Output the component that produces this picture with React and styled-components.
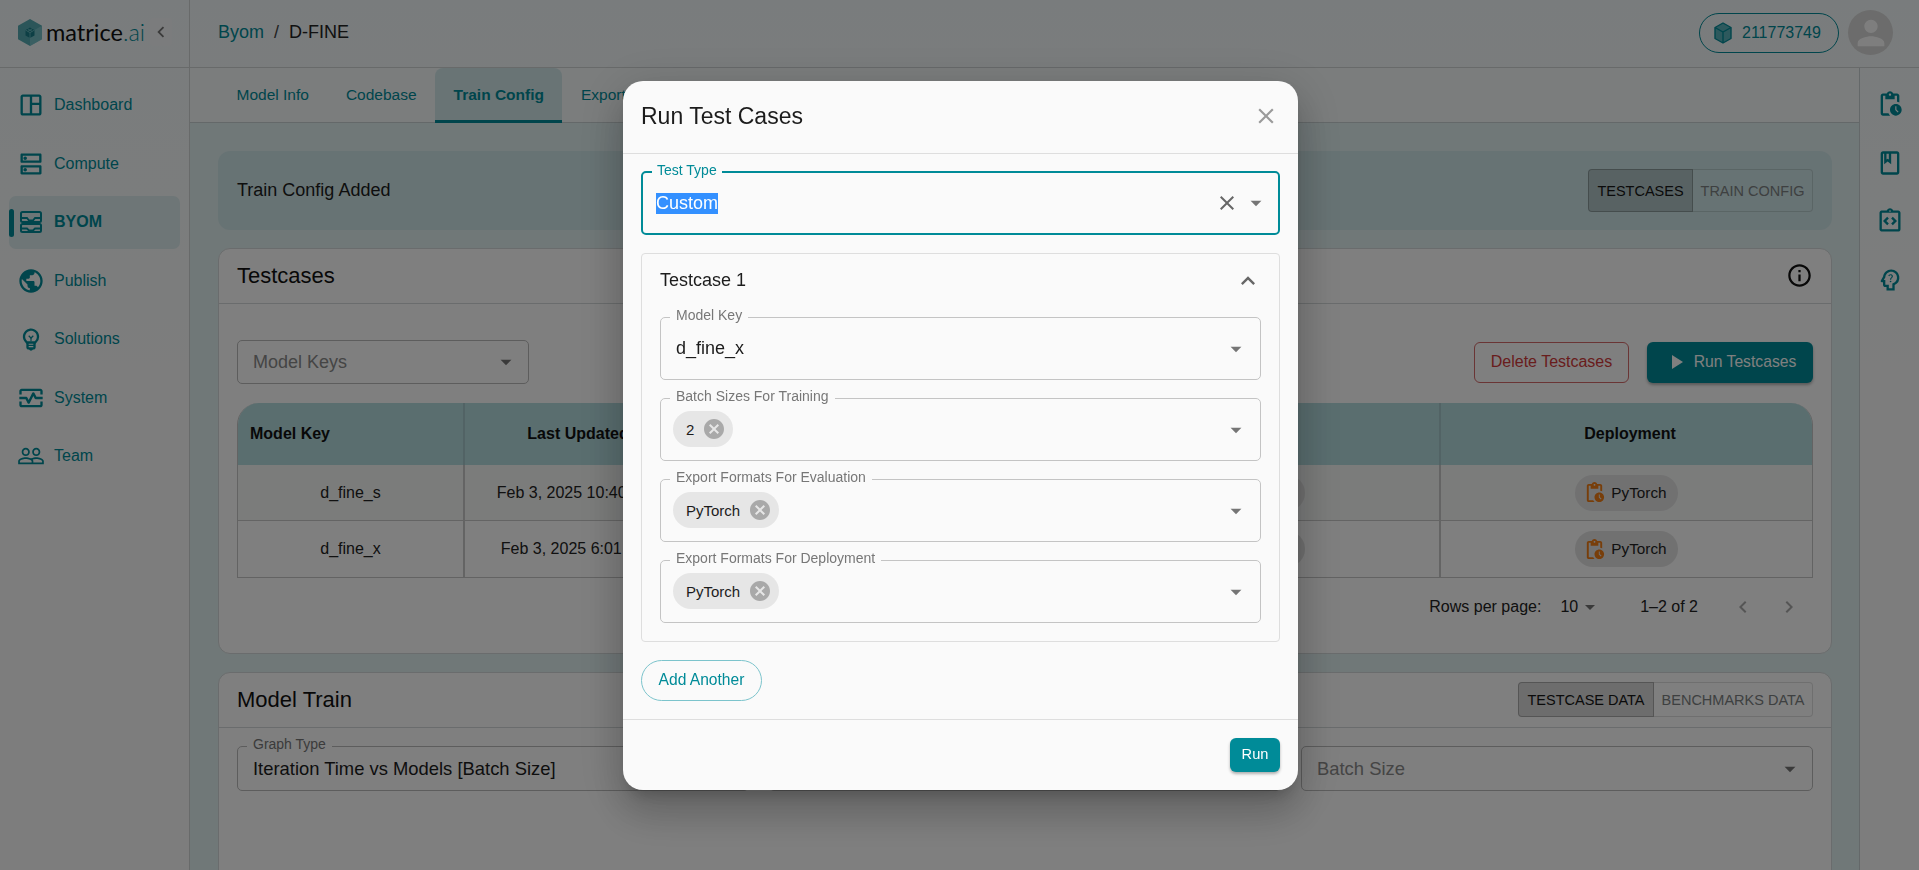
import React from 'react';
import styled, { createGlobalStyle } from 'styled-components';
import {
  MdOutlineSpaceDashboard, MdOutlineDns, MdPublic, MdOutlineEmojiObjects,
  MdOutlineMonitorHeart, MdPeopleOutline, MdOutlinePendingActions, MdOutlineBook,
  MdOutlineIntegrationInstructions, MdOutlinePsychologyAlt, MdInfoOutline, MdPlayArrow,
  MdChevronLeft, MdChevronRight, MdClose, MdArrowDropDown, MdExpandLess, MdCancel, MdPerson,
} from 'react-icons/md';

const teal = '#008b98';
const font = '"Liberation Sans", Arial, sans-serif';

const Global = createGlobalStyle`
  html, body { margin: 0; height: 100%; overflow: hidden; }
  body { font-family: ${font}; background: #fbfdfd; color: #1c1c1c; }
  * { box-sizing: border-box; }
`;

const Page = styled.div`
  height: 870px;
  display: grid;
  grid-template-columns: 190px 1fr 60px;
  grid-template-rows: 68px 1fr;
  background: linear-gradient(180deg, #f3f9fa 0, #fbfbfb 420px);
`;
const Brand = styled.div`
  border-right: 1px solid #d0d4d5;
  border-bottom: 1px solid #d0d4d5;
  display: flex;
  align-items: center;
  padding: 0 17px 3px 18px;
`;
const LogoText = styled.span`
  font-family: Lato, sans-serif;
  font-weight: 400;
  font-size: 23.5px;
  margin-left: 4px;
  color: #111;
  b { font-weight: 300; color: ${teal}; }
`;
const Collapse = styled.span`
  width: 22px; height: 28px;
  margin-left: auto;
  display: flex; align-items: center; justify-content: center;
  background: #f7f9fa;
  border-radius: 4px;
  color: #777;
  font-size: 24px;
`;
const TopBar = styled.header`
  grid-column: 2 / 4;
  border-bottom: 1px solid #d0d4d5;
  display: flex;
  align-items: center;
  padding: 0 26px 2px 28px;
  font-size: 18px;
`;
const Crumb = styled.span`color: ${teal};`;
const Slash = styled.span`margin: 0 10px; color: #444;`;
const Current = styled.span`flex: 1; color: #222;`;
const Credits = styled.div`
  height: 40px; width: 140px;
  border: 1px solid ${teal};
  border-radius: 20px;
  display: flex; align-items: center;
  padding-left: 14px;
  gap: 10px;
  color: ${teal};
  font-size: 16px;
`;
const Avatar = styled.div`
  width: 45px; height: 45px;
  margin-left: 9px;
  border-radius: 50%;
  background: #d8d8d8;
  color: #fdfdfd;
  display: flex; align-items: center; justify-content: center;
  font-size: 40px;
`;
const Side = styled.nav`
  border-right: 1px solid #d0d4d5;
  padding: 10.5px 9px 0;
  display: flex;
  flex-direction: column;
  gap: 5.5px;
`;
const NavItem = styled.div`
  position: relative;
  height: 53px;
  display: flex; align-items: center;
  gap: 9px;
  padding-left: 8px;
  border-radius: 7px;
  color: ${teal};
  font-size: 16px;
  font-weight: ${p => (p.$active ? 700 : 400)};
  background: ${p => (p.$active ? '#dcecee' : 'transparent')};
  svg { font-size: 28px; flex: none; }
  ${p => p.$active && `
    &::before {
      content: ''; position: absolute; left: 0; top: 13px;
      width: 5px; height: 28px; border-radius: 3px; background: ${teal};
    }
  `}
`;
const Main = styled.main`
  background: #e1f0f1;
  display: flex; flex-direction: column;
  min-width: 0;
  overflow: hidden;
`;
const Tabs = styled.div`
  height: 55px;
  flex: none;
  background: #f6fafb;
  border-bottom: 1px solid #c9d1d3;
  display: flex;
  padding-left: 28px;
`;
const Tab = styled.div`
  height: 55px;
  padding: 2px 18.5px 0;
  display: flex; align-items: center;
  font-size: 15.5px;
  color: ${teal};
  font-weight: ${p => (p.$active ? 700 : 400)};
  background: ${p => (p.$active ? '#d2e9eb' : 'transparent')};
  border-radius: 8px 8px 0 0;
  border-bottom: 3px solid ${p => (p.$active ? teal : 'transparent')};
`;
const Content = styled.div`
  padding: 28px 27px 0 28px;
  display: flex; flex-direction: column;
  gap: 18px;
`;
const Banner = styled.div`
  height: 79px;
  border-radius: 12px;
  background: #cfe6e8;
  display: flex; align-items: center; justify-content: space-between;
  padding: 0 19px 0 19px;
  font-size: 18px;
  color: #1c1c1c;
`;
const Toggle = styled.div`display: flex; height: ${p => p.$h || 43}px;`;
const ToggleBtn = styled.div`
  width: ${p => p.$w}px;
  display: flex; align-items: center; justify-content: center;
  font-size: 14.5px;
  white-space: nowrap;
  color: ${p => (p.$on ? '#161616' : '#7c8182')};
  background: ${p => (p.$on ? 'rgba(0,0,0,.14)' : 'transparent')};
  border: 1px solid ${p => (p.$on ? 'rgba(0,0,0,.22)' : 'rgba(0,0,0,.12)')};
  border-left-width: ${p => (p.$on ? 1 : 0)}px;
  border-radius: ${p => (p.$on ? '4px 0 0 4px' : '0 4px 4px 0')};
`;
const Card = styled.section`
  background: #fefefe;
  border: 1px solid #d4d9da;
  border-radius: 12px;
  height: ${p => p.$h}px;
  flex: none;
`;
const CardHead = styled.div`
  height: ${p => p.$h}px;
  border-bottom: 1px solid #d4d9da;
  display: flex; align-items: center; justify-content: space-between;
  padding: 0 18px 1px;
  font-size: 22px;
  color: #111;
`;
const InfoIcon = styled(MdInfoOutline)`font-size: 27px; color: #111;`;
const CardBody = styled.div`padding: 36px 18px 0;`;
const Controls = styled.div`display: flex; align-items: center; height: 44px;`;
const Outlined = styled.div`
  position: relative;
  height: ${p => p.$h || 45}px;
  width: ${p => (p.$w ? p.$w + 'px' : 'auto')};
  border: 1px solid #bbb;
  border-radius: 5px;
  display: flex; align-items: center; justify-content: space-between;
  padding: 0 9px 0 15px;
  font-size: 18px;
  color: ${p => (p.$muted ? '#8a8a8a' : '#1c1c1c')};
`;
const SelectField = styled(Outlined)`
  padding-top: 1px;
  font-size: 18.4px;
`;
const Arrow = styled(MdArrowDropDown)`font-size: 26px; color: #757575; flex: none;`;
const Legend = styled.span`
  position: absolute;
  left: 9px; top: -10.5px;
  padding: 0 6px;
  font-size: 14px;
  line-height: 15px;
  color: #777;
  background: linear-gradient(transparent 6px, ${p => p.$bg || '#fefefe'} 6px, ${p => p.$bg || '#fefefe'} 13px, transparent 13px);
  white-space: nowrap;
`;
const Spacer = styled.div`flex: 1;`;
const DangerBtn = styled.div`
  width: 155px; height: 41px;
  border: 1px solid #d56a6a;
  border-radius: 6px;
  color: #d23a3a;
  display: flex; align-items: center; justify-content: center;
  font-size: 16px;
`;
const PrimaryBtn = styled.div`
  width: 166px; height: 41px;
  margin-left: 18px;
  border-radius: 6px;
  background: ${teal};
  color: #fff;
  display: flex; align-items: center; justify-content: center;
  gap: 6px;
  font-size: 15.7px;
  box-shadow: 0 2px 3px rgba(0,0,0,.3);
  svg { font-size: 24px; }
`;
const Table = styled.div`
  margin-top: 19px;
  display: grid;
  grid-template-columns: 225px 228px 374px 374px 1fr;
  border: 1px solid #c6c6c6;
  border-top: 0;
  border-radius: 22px 22px 0 0;
  overflow: hidden;
`;
const Th = styled.div`
  height: 62px;
  background: #b4dcdf;
  border-left: ${p => (p.$first ? 0 : '2px solid #a5c7ca')};
  display: flex; align-items: center;
  justify-content: ${p => (p.$first ? 'flex-start' : 'center')};
  padding-left: ${p => (p.$first ? 12 : p.$nudge || 0)}px;
  font-weight: 700; font-size: 16px; color: #111;
`;
const Td = styled.div`
  height: 56px;
  background: ${p => (p.$odd ? '#f6f8f7' : '#fefefe')};
  border-left: ${p => (p.$first ? 0 : '2px solid #c9c9c9')};
  border-bottom: ${p => (p.$last ? 0 : '1px solid #c9c9c9')};
  padding-right: ${p => p.$pad || 0}px;
  display: flex; align-items: center; justify-content: center;
  font-size: 16px; color: #222;
`;
const FormatChip = styled.div`
  height: 36px; width: 103px;
  padding-right: 3px;
  border-radius: 18px;
  background: #e2e2e2;
  display: flex; align-items: center; justify-content: center;
  gap: 5px;
  font-size: 15.3px;
  color: #222;
  svg { font-size: 23px; color: #f07c14; }
`;
const Pager = styled.div`
  height: 58px;
  display: flex; align-items: center; justify-content: flex-end;
  font-size: 16px;
  color: #222;
`;
const PagerArrows = styled.div`
  display: flex; gap: 22px;
  margin: 0 12px 0 33px;
  font-size: 24px;
  color: #aaa;
`;
const PageSize = styled.span`
  display: flex; align-items: center;
  margin: 0 44px 0 19px;
  svg { font-size: 24px; margin: 0 -6px 0 0; color: #757575; }
`;
const SelectRow = styled.div`
  display: grid; grid-template-columns: repeat(3, 1fr); gap: 20px;
  padding: 18px 18px 0;
`;
const Rail = styled.aside`
  border-left: 1px solid #c9d1d3;
  display: flex; flex-direction: column; align-items: center;
  padding-top: 22px;
  gap: 30.5px;
  color: ${teal};
  font-size: 28px;
  svg { display: block; }
`;
const Backdrop = styled.div`
  position: fixed; inset: 0;
  background: rgba(0,0,0,.5);
  display: flex;
  justify-content: center;
  padding: 81px 0 0 2px;
`;
const Modal = styled.div`
  width: 675px; height: 709px;
  background: #fafafa;
  border-radius: 20px;
  box-shadow: 0 11px 15px -7px rgba(0,0,0,.2), 0 24px 38px 3px rgba(0,0,0,.14), 0 9px 46px 8px rgba(0,0,0,.12);
  display: flex; flex-direction: column;
`;
const ModalHead = styled.div`
  height: 73px; flex: none;
  border-bottom: 1px solid #dedede;
  display: flex; align-items: center; justify-content: space-between;
  padding: 0 19px 2px 18px;
  font-size: 23px;
  color: #1c1c1c;
  svg { font-size: 26px; color: #9a9a9a; }
`;
const ModalBody = styled.div`
  flex: 1;
  padding: 17px 18px 0;
  display: flex; flex-direction: column; align-items: flex-start;
`;
const TypeField = styled.div`
  position: relative;
  width: 100%; height: 64px;
  border: 2px solid ${teal};
  border-radius: 5px;
  display: flex; align-items: center;
  padding: 0 9px 0 13px;
  font-size: 18px;
`;
const TypeLegend = styled(Legend)`
  color: ${teal}; left: 9px; top: -10px; padding: 0 5px;
`;
const Highlight = styled.span`
  background: #3390ff; color: #fff; line-height: 21px; flex: none;
`;
const Grow = styled.span`flex: 1;`;
const ClearIcon = styled(MdClose)`font-size: 24px; color: #666; margin-right: 4px;`;
const Accordion = styled.div`
  width: 100%; height: 389px;
  margin-top: 18px;
  border: 1px solid #dedede;
  border-radius: 4px;
  padding: 0 18px;
`;
const AccHead = styled.div`
  height: 63px;
  padding-bottom: 10px;
  display: flex; align-items: center; justify-content: space-between;
  font-size: 18px;
  color: #1c1c1c;
  svg { font-size: 28px; color: #666; margin-right: -1px; }
`;
const Fields = styled.div`display: flex; flex-direction: column; gap: 18px;`;
const Field = styled(Outlined)`
  height: 63px;
  border-color: #c4c4c4;
  padding: 0 11px 0 12px;
`;
const FieldValue = styled.span`padding-left: 3px;`;
const ChipBox = styled.div`
  height: 36px;
  margin-top: -1px;
  border-radius: 18px;
  background: #e6e6e6;
  display: flex; align-items: center;
  padding: 0 7px 0 13px;
  gap: 8px;
  font-size: 15px;
  color: #1c1c1c;
  svg { font-size: 24px; color: #a9a9a9; }
`;
const AddBtn = styled.div`
  margin-top: 18px;
  width: 121px; height: 41px;
  padding-bottom: 1px;
  border: 1px solid #7cc4cc;
  border-radius: 21px;
  display: flex; align-items: center; justify-content: center;
  font-size: 15.6px;
  color: ${teal};
`;
const ModalFoot = styled.div`
  height: 71px; flex: none;
  border-top: 1px solid #dedede;
  display: flex; justify-content: flex-end;
  padding: 18px 18px 0;
`;
const RunBtn = styled.div`
  width: 50px; height: 34px;
  background: ${teal};
  border-radius: 6px;
  color: #fff;
  font-size: 14.6px;
  padding-bottom: 2px;
  display: flex; align-items: center; justify-content: center;
  box-shadow: 0 2px 3px rgba(0,0,0,.3);
`;

const Logo = () => (
  <svg width="24" height="27" viewBox="0 0 24 27">
    <path d="M12 0 24 6.7v13.6L12 27 0 20.3V6.7z" fill="#56aab2" />
    <path d="M12 13.5 24 6.7v13.6L12 27z" fill="#8ed0d6" opacity=".55" />
    <path d="M12 8.5l4.5 2.6v5.3L12 19l-4.5-2.6v-5.3z" fill="#1a7f8a" />
    <path d="M7.5 11l4.5 2.7 4.5-2.7M12 13.7V19M9.7 9.8l4.5 2.6M14.3 9.8l-4.5 2.6" stroke="#7cc6cc" strokeWidth=".7" fill="none" />
  </svg>
);
const Cube = () => (
  <svg width="18" height="22" viewBox="0 0 18 22">
    <path d="M9 1 17 5.5v11L9 21 1 16.5v-11z" fill="#5bb2ba" stroke={teal} strokeWidth="1.4" strokeLinejoin="round" />
    <path d="M1 5.5 9 10l8-4.5M9 10v11" fill="none" stroke={teal} strokeWidth="1.4" />
  </svg>
);
const ByomIcon = () => (
  <svg width="28" height="28" viewBox="0 0 28 28" fill="none" stroke={teal} strokeWidth="2">
    <rect x="4" y="4" width="20" height="10" rx="1.5" />
    <rect x="4" y="16" width="20" height="8" rx="1.5" />
    <path d="M5 10h5l2 2.5h4l2-2.5h5M5 20.5h5l2 2h4l2-2h5" strokeWidth="1.8" />
  </svg>
);

const nav = [
  ['Dashboard', <MdOutlineSpaceDashboard />],
  ['Compute', <MdOutlineDns />],
  ['BYOM', <ByomIcon />, true],
  ['Publish', <MdPublic />],
  ['Solutions', <MdOutlineEmojiObjects />],
  ['System', <MdOutlineMonitorHeart />],
  ['Team', <MdPeopleOutline />],
];
const rows = [
  ['d_fine_s', 'Feb 3, 2025 10:40 AM', true],
  ['d_fine_x', 'Feb 3, 2025 6:01 PM', false],
];
const Chip = ({ children }) => <ChipBox>{children}<MdCancel /></ChipBox>;
const Format = () => <FormatChip><MdOutlinePendingActions />PyTorch</FormatChip>;

export default function App() {
  return (
    <Page>
      <Global />
      <Brand>
        <Logo />
        <LogoText>matrice<b>.ai</b></LogoText>
        <Collapse><MdChevronLeft /></Collapse>
      </Brand>
      <TopBar>
        <Crumb>Byom</Crumb><Slash>/</Slash><Current>D-FINE</Current>
        <Credits><Cube />211773749</Credits>
        <Avatar><MdPerson /></Avatar>
      </TopBar>
      <Side>
        {nav.map(([label, icon, active]) => (
          <NavItem key={label} $active={active}>{icon}{label}</NavItem>
        ))}
      </Side>
      <Main>
        <Tabs>
          <Tab>Model Info</Tab>
          <Tab>Codebase</Tab>
          <Tab $active>Train Config</Tab>
          <Tab>Export Config</Tab>
        </Tabs>
        <Content>
          <Banner>
            Train Config Added
            <Toggle>
              <ToggleBtn $on $w={105}>TESTCASES</ToggleBtn>
              <ToggleBtn $w={120}>TRAIN CONFIG</ToggleBtn>
            </Toggle>
          </Banner>
          <Card $h={406}>
            <CardHead $h={55}>Testcases<InfoIcon /></CardHead>
            <CardBody>
              <Controls>
                <Outlined $w={292} $h={44} $muted>Model Keys<Arrow /></Outlined>
                <Spacer />
                <DangerBtn>Delete Testcases</DangerBtn>
                <PrimaryBtn><MdPlayArrow />Run Testcases</PrimaryBtn>
              </Controls>
              <Table>
                <Th $first>Model Key</Th>
                <Th>Last Updated</Th>
                <Th>Train</Th>
                <Th>Evaluation</Th>
                <Th $nudge={7}>Deployment</Th>
                {rows.map(([key, date, odd], i) => (
                  <React.Fragment key={key}>
                    <Td $first $odd={odd} $last={i === 1}>{key}</Td>
                    <Td $odd={odd} $last={i === 1} $pad={5}>{date}</Td>
                    <Td $odd={odd} $last={i === 1}><Format /></Td>
                    <Td $odd={odd} $last={i === 1}><Format /></Td>
                    <Td $odd={odd} $last={i === 1}><Format /></Td>
                  </React.Fragment>
                ))}
              </Table>
              <Pager>
                Rows per page:
                <PageSize>10<MdArrowDropDown /></PageSize>
                1–2 of 2
                <PagerArrows><MdChevronLeft /><MdChevronRight /></PagerArrows>
              </Pager>
            </CardBody>
          </Card>
          <Card $h={240}>
            <CardHead $h={55}>
              Model Train
              <Toggle $h={35}>
                <ToggleBtn $on $w={136}>TESTCASE DATA</ToggleBtn>
                <ToggleBtn $w={159}>BENCHMARKS DATA</ToggleBtn>
              </Toggle>
            </CardHead>
            <SelectRow>
              <SelectField><Legend>Graph Type</Legend>Iteration Time vs Models [Batch Size]<Arrow /></SelectField>
              <SelectField $muted>Models<Arrow /></SelectField>
              <SelectField $muted>Batch Size<Arrow /></SelectField>
            </SelectRow>
          </Card>
        </Content>
      </Main>
      <Rail>
        <MdOutlinePendingActions />
        <MdOutlineBook />
        <MdOutlineIntegrationInstructions />
        <MdOutlinePsychologyAlt />
      </Rail>
      <Backdrop>
        <Modal>
          <ModalHead>Run Test Cases<MdClose /></ModalHead>
          <ModalBody>
            <TypeField>
              <TypeLegend $bg="#fafafa">Test Type</TypeLegend>
              <Highlight>Custom</Highlight>
              <Grow />
              <ClearIcon />
              <Arrow />
            </TypeField>
            <Accordion>
              <AccHead>Testcase 1<MdExpandLess /></AccHead>
              <Fields>
                <Field><Legend $bg="#fafafa">Model Key</Legend><FieldValue>d_fine_x</FieldValue><Arrow /></Field>
                <Field><Legend $bg="#fafafa">Batch Sizes For Training</Legend><Chip>2</Chip><Arrow /></Field>
                <Field><Legend $bg="#fafafa">Export Formats For Evaluation</Legend><Chip>PyTorch</Chip><Arrow /></Field>
                <Field><Legend $bg="#fafafa">Export Formats For Deployment</Legend><Chip>PyTorch</Chip><Arrow /></Field>
              </Fields>
            </Accordion>
            <AddBtn>Add Another</AddBtn>
          </ModalBody>
          <ModalFoot><RunBtn>Run</RunBtn></ModalFoot>
        </Modal>
      </Backdrop>
    </Page>
  );
}
